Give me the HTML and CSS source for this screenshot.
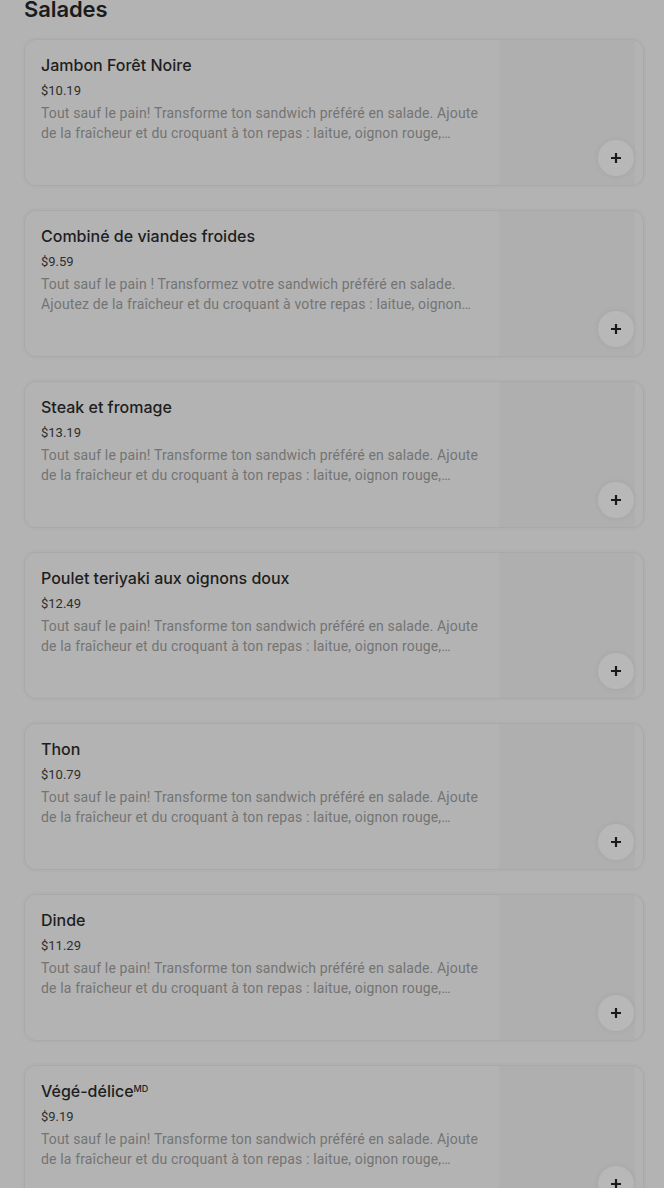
FILE: index.html
```html
<!DOCTYPE html>
<html lang="fr">
<head>
<meta charset="utf-8">
<title>Salades</title>
<link rel="stylesheet" href="styles.css">
</head>
<body>
<main class="page">
  <h2 class="section-title">Salades</h2>
  <ul class="items">
    <li class="card">
      <div class="info">
        <h3 class="name">Jambon Forêt Noire</h3>
        <div class="price">$10.19</div>
        <p class="desc">Tout sauf le pain! Transforme ton sandwich préféré en salade. Ajoute de la fraîcheur et du croquant à ton repas : laitue, oignon rouge, tomates, concombres, poivrons verts et olives noires.</p>
      </div>
      <div class="thumb"></div>
      <button class="add" aria-label="Ajouter"><svg viewBox="0 0 12 12" width="12" height="12"><path d="M6 1v10M1 6h10" stroke="currentColor" stroke-width="2.2"/></svg></button>
    </li>
    <li class="card">
      <div class="info">
        <h3 class="name">Combiné de viandes froides</h3>
        <div class="price">$9.59</div>
        <p class="desc">Tout sauf le pain ! Transformez votre sandwich préféré en salade. Ajoutez de la fraîcheur et du croquant à votre repas : laitue, oignon rouge, tomates, concombres, poivrons verts et olives noires.</p>
      </div>
      <div class="thumb"></div>
      <button class="add" aria-label="Ajouter"><svg viewBox="0 0 12 12" width="12" height="12"><path d="M6 1v10M1 6h10" stroke="currentColor" stroke-width="2.2"/></svg></button>
    </li>
    <li class="card">
      <div class="info">
        <h3 class="name">Steak et fromage</h3>
        <div class="price">$13.19</div>
        <p class="desc">Tout sauf le pain! Transforme ton sandwich préféré en salade. Ajoute de la fraîcheur et du croquant à ton repas : laitue, oignon rouge, tomates, concombres, poivrons verts et olives noires.</p>
      </div>
      <div class="thumb"></div>
      <button class="add" aria-label="Ajouter"><svg viewBox="0 0 12 12" width="12" height="12"><path d="M6 1v10M1 6h10" stroke="currentColor" stroke-width="2.2"/></svg></button>
    </li>
    <li class="card">
      <div class="info">
        <h3 class="name">Poulet teriyaki aux oignons doux</h3>
        <div class="price">$12.49</div>
        <p class="desc">Tout sauf le pain! Transforme ton sandwich préféré en salade. Ajoute de la fraîcheur et du croquant à ton repas : laitue, oignon rouge, tomates, concombres, poivrons verts et olives noires.</p>
      </div>
      <div class="thumb"></div>
      <button class="add" aria-label="Ajouter"><svg viewBox="0 0 12 12" width="12" height="12"><path d="M6 1v10M1 6h10" stroke="currentColor" stroke-width="2.2"/></svg></button>
    </li>
    <li class="card">
      <div class="info">
        <h3 class="name">Thon</h3>
        <div class="price">$10.79</div>
        <p class="desc">Tout sauf le pain! Transforme ton sandwich préféré en salade. Ajoute de la fraîcheur et du croquant à ton repas : laitue, oignon rouge, tomates, concombres, poivrons verts et olives noires.</p>
      </div>
      <div class="thumb"></div>
      <button class="add" aria-label="Ajouter"><svg viewBox="0 0 12 12" width="12" height="12"><path d="M6 1v10M1 6h10" stroke="currentColor" stroke-width="2.2"/></svg></button>
    </li>
    <li class="card">
      <div class="info">
        <h3 class="name">Dinde</h3>
        <div class="price">$11.29</div>
        <p class="desc">Tout sauf le pain! Transforme ton sandwich préféré en salade. Ajoute de la fraîcheur et du croquant à ton repas : laitue, oignon rouge, tomates, concombres, poivrons verts et olives noires.</p>
      </div>
      <div class="thumb"></div>
      <button class="add" aria-label="Ajouter"><svg viewBox="0 0 12 12" width="12" height="12"><path d="M6 1v10M1 6h10" stroke="currentColor" stroke-width="2.2"/></svg></button>
    </li>
    <li class="card">
      <div class="info">
        <h3 class="name">Végé-délice<sup class="tm">MD</sup></h3>
        <div class="price">$9.19</div>
        <p class="desc">Tout sauf le pain! Transforme ton sandwich préféré en salade. Ajoute de la fraîcheur et du croquant à ton repas : laitue, oignon rouge, tomates, concombres, poivrons verts et olives noires.</p>
      </div>
      <div class="thumb"></div>
      <button class="add" aria-label="Ajouter"><svg viewBox="0 0 12 12" width="12" height="12"><path d="M6 1v10M1 6h10" stroke="currentColor" stroke-width="2.2"/></svg></button>
    </li>
  </ul>
</main>
</body>
</html>
```

FILE: styles.css
```css
html, body {
  margin: 0;
  padding: 0;
  background: #b3b3b3;
  overflow: hidden;
}

.page {
  padding: 0 20px 0 24px;
  font-family: Roboto, "Noto Sans", sans-serif;
}

.section-title {
  margin: -7px 0 14px;
  font-family: Inter, Roboto, sans-serif;
  font-size: 22px;
  line-height: 32px;
  font-weight: 600;
  color: #1b1b1b;
  letter-spacing: -0.1px;
}

.items {
  list-style: none;
  margin: 0;
  padding: 0;
  display: flex;
  flex-direction: column;
  gap: 24px;
}

.card {
  position: relative;
  display: flex;
  height: 147px;
  box-sizing: border-box;
  border: 1px solid #a9a9a9;
  border-radius: 12px;
  box-shadow: 0 0 0 2px rgba(0, 0, 0, 0.015);
  overflow: hidden;
}

.info {
  flex: 1;
  min-width: 0;
  padding: 13px 14px 0 16px;
}

.name {
  margin: 0;
  font-family: Inter, Roboto, sans-serif;
  font-size: 16px;
  line-height: 24px;
  font-weight: 500;
  color: #1e1e1e;
}

.tm {
  font-size: 9px;
  line-height: 0;
  vertical-align: 5px;
  font-weight: 500;
}

.price {
  margin-top: 4px;
  font-size: 13px;
  line-height: 20px;
  color: #2e2e2e;
}

.desc {
  margin: 2px 0 0;
  font-size: 14px;
  line-height: 20px;
  letter-spacing: 0.15px;
  color: #747474;
  display: -webkit-box;
  -webkit-line-clamp: 2;
  -webkit-box-orient: vertical;
  overflow: hidden;
}

.thumb {
  width: 136px;
  margin-right: 8px;
  flex: none;
  background: #afafaf;
}

.add {
  position: absolute;
  right: 9px;
  bottom: 9px;
  width: 36px;
  height: 36px;
  border: none;
  border-radius: 50%;
  padding: 0;
  background: #b8b8b8;
  color: #1a1a1a;
  box-shadow: 0 0 6px rgba(0, 0, 0, 0.06);
  display: flex;
  align-items: center;
  justify-content: center;
}
```
